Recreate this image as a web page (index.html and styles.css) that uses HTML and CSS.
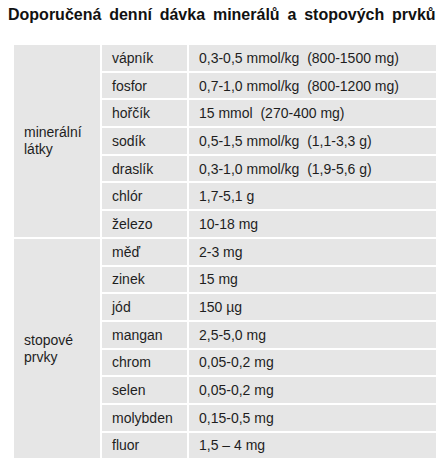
FILE: index.html
```html
<!DOCTYPE html>
<html lang="cs">
<head>
<meta charset="utf-8">
<link rel="stylesheet" href="styles.css">
</head>
<body>
<h1 class="title">Doporučená denní dávka minerálů a stopových prvků</h1>
<div class="table">
  <div class="cat cat-min">minerální<br>látky</div>
  <div class="cell">vápník</div><div class="cell">0,3-0,5 mmol/kg&nbsp; (800-1500 mg)</div>
  <div class="cell">fosfor</div><div class="cell">0,7-1,0 mmol/kg&nbsp; (800-1200 mg)</div>
  <div class="cell">hořčík</div><div class="cell">15 mmol&nbsp; (270-400 mg)</div>
  <div class="cell">sodík</div><div class="cell">0,5-1,5 mmol/kg&nbsp; (1,1-3,3 g)</div>
  <div class="cell">draslík</div><div class="cell">0,3-1,0 mmol/kg&nbsp; (1,9-5,6 g)</div>
  <div class="cell">chlór</div><div class="cell">1,7-5,1 g</div>
  <div class="cell">železo</div><div class="cell">10-18 mg</div>
  <div class="cat cat-trace">stopové<br>prvky</div>
  <div class="cell">měď</div><div class="cell">2-3 mg</div>
  <div class="cell">zinek</div><div class="cell">15 mg</div>
  <div class="cell">jód</div><div class="cell">150 µg</div>
  <div class="cell">mangan</div><div class="cell">2,5-5,0 mg</div>
  <div class="cell">chrom</div><div class="cell">0,05-0,2 mg</div>
  <div class="cell">selen</div><div class="cell">0,05-0,2 mg</div>
  <div class="cell">molybden</div><div class="cell">0,15-0,5 mg</div>
  <div class="cell">fluor</div><div class="cell">1,5 – 4 mg</div>
</div>
</body>
</html>
```
FILE: styles.css
```css
html, body { margin: 0; padding: 0; background: #fff; }
body {
  font-family: "Liberation Sans", Arial, sans-serif;
  color: #1e1e1e;
  width: 440px;
  height: 462px;
  overflow: hidden;
}
.title {
  margin: 0;
  padding: 5px 0 0 8px;
  font-size: 16px;
  font-weight: bold;
  line-height: 20px;
  color: #111;
  word-spacing: 3.4px;
  white-space: nowrap;
}
.table {
  margin: 20px 0 0 14px;
  width: 422px;
  display: grid;
  grid-template-columns: 86px 85px 1fr;
  grid-template-rows: repeat(15, 25.7px);
  gap: 2px;
  background: #fff;
  font-size: 14px;
}
.cell, .cat {
  background: #e6e6e6;
  display: flex;
  align-items: center;
  padding-left: 10px;
  white-space: nowrap;
}
.cat { line-height: 17px; }
.cat-min { grid-column: 1; grid-row: 1 / span 7; }
.cat-trace { grid-column: 1; grid-row: 8 / span 8; }
```
